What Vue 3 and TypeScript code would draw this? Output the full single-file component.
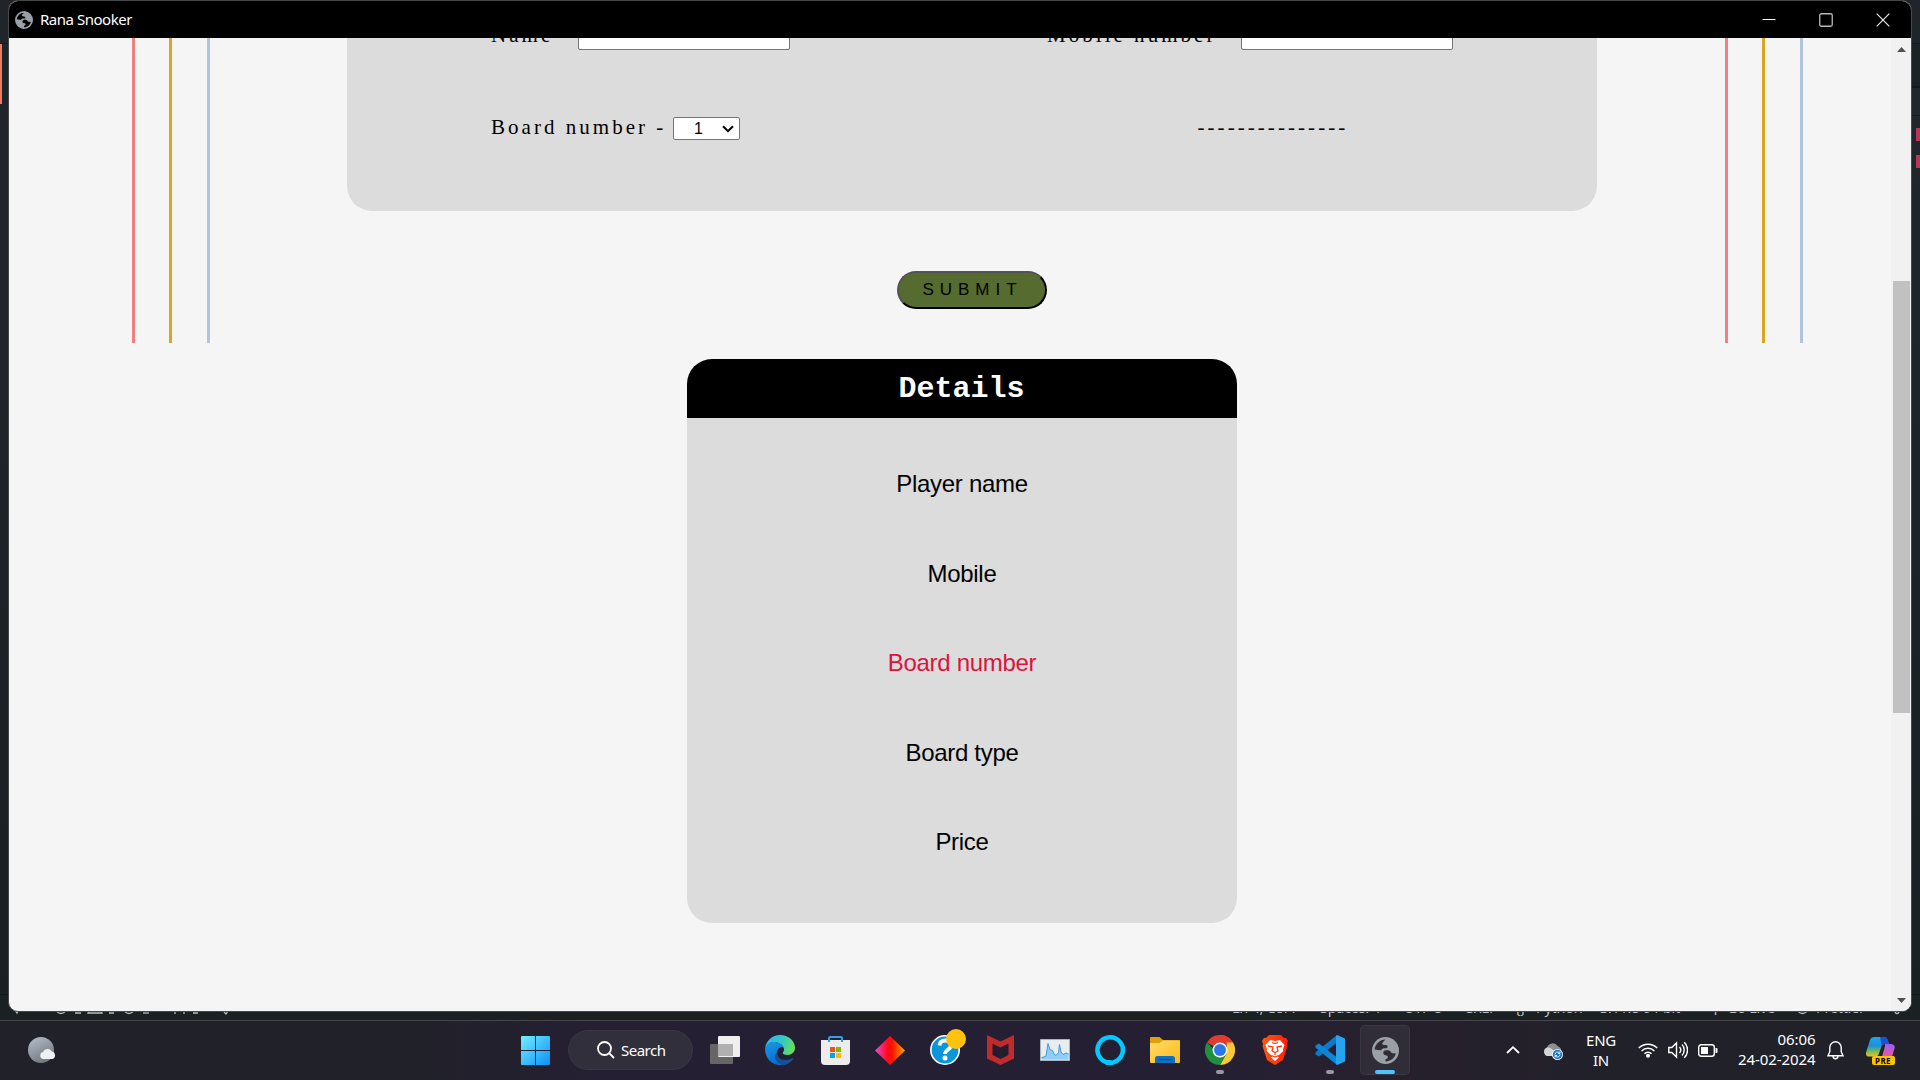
<script setup lang="ts">
import { ref } from 'vue'

interface DetailRow {
  label: string
  alert?: boolean
}

const stripes: string[] = ['coral', 'gold', 'steel']
const boards: number[] = [1, 2, 3, 4]
const board = ref<number>(1)
const playerName = ref<string>('')
const mobile = ref<string>('')

const globeLand =
  'M2.500 12C3.300 6.600 7.600 2.700 13 2.500L10.300 5.200c-.8.900-.3 2.300 1 2.400l2.200.2c2 .3 2 2.700.3 3-1.200.3-2.600-.2-3.600.5-1 .8-1.200 1.700-2.700 1.500zM11.800 13.200c1.700-.5 3.700-.6 5.200 0 1.400.6 1.500 2.300 3 2.500l3 .2C21.700 20.300 18 23.500 13 23.500v-2.200c2.300-.2 3-2.200 1.600-3.200-.9-.6-2.300-.3-3.100-1.200-.9-1.100-.9-3.200.3-3.700z'

const details: DetailRow[] = [
  { label: 'Player name' },
  { label: 'Mobile' },
  { label: 'Board number', alert: true },
  { label: 'Board type' },
  { label: 'Price' },
]
</script>

<template>
  <div class="desktop">
    <!-- editor behind the app window -->
    <div class="editor">
      <div class="edge edge-left"><i class="tab-mark"></i></div>
      <div class="edge edge-right"><i class="err"></i><i class="err"></i></div>
      <div class="status">
        <div class="status-left">
          <svg width="240" height="22" viewBox="0 0 240 22" fill="none" stroke="#b9bcc0" stroke-width="1.3">
            <path d="M12 10l5 8 5-8" />
            <circle cx="61" cy="13" r="5.5" /><path d="M75 18h6M88 18h14l-7-12zM109 18h5" />
            <circle cx="129" cy="13" r="5.500" /><path d="M143 18h6" />
            <path d="M175 19v-5M184 19v-5M175 16h9M193 18h5M224 17l2 2 2-3" />
          </svg>
        </div>
        <span style="width: 88px">Ln 4, Col 7</span>
        <span style="width: 84px">Spaces: 4</span>
        <span style="width: 60px">UTF-8</span>
        <span style="width: 51px">CRLF</span>
        <span style="width: 21px">{}</span>
        <span style="width: 64px">Python</span>
        <span style="width: 110px">3.11.8 64-bit</span>
        <span style="width: 17px">⚲</span>
        <span style="width: 69px">Go Live</span>
        <svg width="20" height="22" viewBox="0 0 20 22" fill="none" stroke="#b9bcc0" stroke-width="1.3"><circle cx="6.500" cy="13" r="5.500" /></svg>
        <span style="width: 74px">Prettier</span>
        <svg width="14" height="22" viewBox="0 0 14 22" fill="none" stroke="#b9bcc0" stroke-width="1.300"><path d="M1 16h11M5 16a2 2.500 0 0 0 4 0" /></svg>
      </div>
    </div>

    <main class="window">
      <header class="titlebar">
        <svg class="app-icon" width="18" height="18" viewBox="0 0 26 26">
          <circle cx="13" cy="13" r="13" fill="#9aa0a6" />
          <path :d="globeLand" fill="#000" />
        </svg>
        <span class="title">Rana Snooker</span>
        <div class="controls">
          <svg width="14" height="14" viewBox="0 0 14 14"><path d="M.5 6.500h13" stroke="#fff" /></svg>
          <svg width="14" height="14" viewBox="0 0 14 14"><rect x=".75" y=".75" width="12.500" height="12.500" rx="1.500" fill="none" stroke="#b8b8b8" stroke-width="1.300" /></svg>
          <svg width="14" height="14" viewBox="0 0 14 14"><path d="M.7.7l12.600 12.600M13.300.7L.7 13.300" stroke="#e8e8e8" stroke-width="1.200" /></svg>
        </div>
      </header>

      <div class="body">
        <section class="page">
          <div class="stage">
            <div class="stripes"><i v-for="s in stripes" :key="s" :class="s"></i></div>
            <form class="form" @submit.prevent>
              <div class="form-card">
                <div class="row row-top">
                  <label class="name-label">Name - </label>
                  <input v-model="playerName" type="text" />
                  <label class="mobile-label">Mobile number - </label>
                  <input v-model="mobile" type="text" />
                </div>
                <div class="row row-board">
                  <label class="board-label">Board number -</label>
                  <div class="select">
                    <span>{{ boards[board - 1] }}</span>
                    <svg width="12" height="8" viewBox="0 0 12 8"><path d="M1 1.200l5 5 5-5" fill="none" stroke="#000" stroke-width="2" /></svg>
                  </div>
                  <span class="dashes">---------------</span>
                </div>
              </div>
              <button class="submit" type="submit">SUBMIT</button>
            </form>
            <div class="stripes"><i v-for="s in stripes" :key="s" :class="s"></i></div>
          </div>

          <article class="details">
            <h2>Details</h2>
            <p v-for="d in details" :key="d.label" :class="{ alert: d.alert }">{{ d.label }}</p>
          </article>
        </section>
        <aside class="scrollbar">
          <svg width="9" height="5" viewBox="0 0 9 5"><path d="M0 5L4.500 0 9 5z" fill="#505050" /></svg>
          <div class="thumb"></div>
          <svg class="down" width="9" height="5" viewBox="0 0 9 5"><path d="M0 0l4.500 5L9 0z" fill="#505050" /></svg>
        </aside>
      </div>
    </main>

    <footer class="taskbar">
      <svg class="weather" width="28" height="27" viewBox="0 0 28 27">
        <defs>
          <linearGradient id="moon" x1="0" y1="0" x2=".5" y2="1"><stop offset="0" stop-color="#b7c0cb" /><stop offset="1" stop-color="#737b84" /></linearGradient>
        </defs>
        <circle cx="13" cy="13" r="13" fill="url(#moon)" />
        <path d="M15 22a3.600 3.600 0 0 1 0-7 5 5 0 0 1 8.800-.5A3.900 3.900 0 0 1 24.500 22z" fill="#edf1f4" />
      </svg>

      <nav class="apps">
        <span class="slot start">
          <svg width="29" height="29" viewBox="0 0 29 29">
            <defs><linearGradient id="win" x1="0" y1="0" x2="1" y2="1"><stop offset="0" stop-color="#74eeff" /><stop offset="1" stop-color="#0a90f8" /></linearGradient></defs>
            <path d="M1 0h13v14H0V1a1 1 0 0 1 1-1zM15 0h13a1 1 0 0 1 1 1v13H15zM0 15h14v14H1a1 1 0 0 1-1-1zM15 15h14v13a1 1 0 0 1-1 1H15z" fill="url(#win)" />
          </svg>
        </span>
        <span class="search">
          <svg width="18" height="18" viewBox="0 0 18 18" fill="none" stroke="#fff" stroke-width="1.800"><circle cx="7.500" cy="7.500" r="6.500" /><path d="M12 12l5 5" /></svg>
          <b>Search</b>
        </span>
        <span class="slot">
          <svg width="30" height="28" viewBox="0 0 30 28">
            <rect x="0" y="8" width="23" height="20" rx="1" fill="#666" />
            <rect x="8" y="0" width="22" height="21" rx="1" fill="#efeff0" />
            <path d="M8 8h15v12H8z" fill="#b0b0b1" />
          </svg>
        </span>
        <span class="slot">
          <svg width="30" height="30" viewBox="0 0 30 30">
            <defs>
              <linearGradient id="e1" x1="0" y1=".3" x2="1" y2=".5"><stop offset="0" stop-color="#2fb6f0" /><stop offset=".55" stop-color="#32c8c8" /><stop offset="1" stop-color="#69e04f" /></linearGradient>
              <linearGradient id="e2" x1="0" y1="0" x2=".4" y2="1"><stop offset="0" stop-color="#1a9be2" /><stop offset="1" stop-color="#0a6cd0" /></linearGradient>
            </defs>
            <path d="M0 14C.8 6 7 0 15 0c8.500 0 15 6 15 12.800 0 4.500-3.500 7.200-7.500 7.200-3.500 0-5-1.200-4.700-2.200.4-1 1.200-1.600 1.200-3.300C19 10.800 14.500 7 9 7 5 7 1.800 9.800 0 14z" fill="url(#e1)" />
            <path d="M0 14C1.500 9.500 5 7 9 7c4.500 0 8.500 2.500 9.700 5.500C16 11 12 13.500 12 18c0 6 5 9.500 7 11-1.500.7-2.700 1-4 1C6.500 30 0 23 0 14z" fill="url(#e2)" />
            <path d="M12 17c-.5 4.500 3.500 8 8.500 8 3 0 5-.9 7-2 .6-.3 1 .2.700.7C26 27 22 30 18 30c-5-1-8-5-8-8.500 0-2 .8-3.500 2-4.500z" fill="#12509b" />
          </svg>
        </span>
        <span class="slot">
          <svg width="29" height="29" viewBox="0 0 29 29">
            <path d="M0 4h29v21a4 4 0 0 1-4 4H4a4 4 0 0 1-4-4z" fill="#ececec" />
            <path d="M8 6V2a1 1 0 0 1 1-1h11a1 1 0 0 1 1 1v4" fill="none" stroke="#22a6e8" stroke-width="2" />
            <path d="M9 11h5v5H9z" fill="#f25022" /><path d="M15 11h5v5h-5z" fill="#7fba00" /><path d="M9 17h5v5H9z" fill="#00a4ef" /><path d="M15 17h5v5h-5z" fill="#ffb900" />
          </svg>
        </span>
        <span class="slot">
          <svg width="30" height="29" viewBox="0 0 30 29">
            <defs><linearGradient id="dia"><stop offset="0" stop-color="#e84bd0" /><stop offset=".42" stop-color="#ff0a1e" /><stop offset=".58" stop-color="#ff1200" /><stop offset="1" stop-color="#ffae00" /></linearGradient></defs>
            <path d="M15 0l15 14.500L15 29 0 14.500z" fill="url(#dia)" />
          </svg>
        </span>
        <span class="slot">
          <svg width="30" height="30" viewBox="0 0 30 30">
            <circle cx="15" cy="15" r="14.200" fill="#0a96d8" stroke="#fff" stroke-width="1.600" />
            <path d="M9.500 10.500c.3-3.500 3-5 5.800-5 3.200 0 5.700 1.800 5.700 4.700 0 4.300-6 4.300-6 8.800" fill="none" stroke="#fff" stroke-width="3.800" />
            <circle cx="15" cy="23" r="2.500" fill="#fff" />
          </svg>
          <i class="badge"></i>
        </span>
        <span class="slot">
          <svg width="27" height="30" viewBox="0 0 27 30"><path d="M0 0l13.500 6.500L27 0v23.500L13.500 30 0 23.500z" fill="#c22a2b" /><path d="M5.500 8.500l8 4 8-4v11.500l-8 4-8-4z" fill="#241d31" /></svg>
        </span>
        <span class="slot">
          <svg width="30" height="22" viewBox="0 0 30 22">
            <path d="M.5.500h29v21H.5z" fill="#e8edf1" stroke="#aab4bd" />
            <path d="M1.500 20.500v-2l2.500-.5 2-1L8 4.500l2 6 2.500 1L14 15l2 1.500 2.500-3 1-8L21 13l2 2.500 3-1.500 2.500 1v5.500z" fill="#8ecdf7" />
            <path d="M1.500 18.500L4 18l2-1L8 4.500l2 6 2.500 1L14 15l2 1.500 2.500-3 1-8L21 13l2 2.500 3-1.500 2.500 1" fill="none" stroke="#469bd3" />
          </svg>
        </span>
        <span class="slot">
          <svg width="30" height="30" viewBox="0 0 30 30"><path d="M13 27.500a12.700 12.700 0 1 1 6-.4C16 28 14 28.500 13 30z" fill="none" stroke="#00caff" stroke-width="4.500" /><path d="M12.800 25h4.500l-3.800 2.500V30h-.7z" fill="#00caff" /></svg>
        </span>
        <span class="slot">
          <svg width="30" height="26" viewBox="0 0 30 26">
            <defs><linearGradient id="fold" x1="0" y1="0" x2="1" y2="1"><stop offset="0" stop-color="#ffdc6c" /><stop offset="1" stop-color="#fcba14" /></linearGradient></defs>
            <path d="M0 1a1 1 0 0 1 1-1h8.500L13 3h16a1 1 0 0 1 1 1v6H0z" fill="#e0a00c" />
            <path d="M0 6h9.500L13 3.500h17V25a1 1 0 0 1-1 1H1a1 1 0 0 1-1-1z" fill="url(#fold)" />
            <path d="M5 26v-4.500a2.500 2.500 0 0 1 2.500-2.500h15a2.500 2.500 0 0 1 2.500 2.500V26z" fill="#0f6fc0" /><path d="M9 22.500h12.500" stroke="#0b4a86" />
          </svg>
        </span>
        <span class="slot running">
          <svg width="30" height="30" viewBox="0 0 30 30">
            <path d="M15 15L2 7.500A15 15 0 0 1 28 7.500z" fill="#e33b2e" />
            <path d="M15 0a15 15 0 0 1 13 7.500H15z" fill="#e33b2e" />
            <path d="M28 7.500A15 15 0 0 1 15 30l6.500-11.500L22 7.500z" fill="#fcc934" />
            <path d="M2 7.500A15 15 0 0 0 15 30l6.500-11.200L15 20z" fill="#1f9040" />
            <circle cx="15" cy="15" r="7.500" fill="#fff" /><circle cx="15" cy="15" r="6" fill="#2a76ea" />
          </svg>
        </span>
        <span class="slot">
          <svg width="26" height="30" viewBox="0 0 26 30">
            <defs><linearGradient id="brave"><stop offset="0" stop-color="#ff5a10" /><stop offset="1" stop-color="#ff1c04" /></linearGradient></defs>
            <path d="M7 0h12l3 3 2-.2L26 6l-1 3 .5 2-4.500 14L13 30l-8-5L.5 11 1 9 0 6l2-3.200L4 3z" fill="url(#brave)" />
            <path d="M8 5l5 1 5-1 4.500 5-1.500 4 .3 2L17 20l-1.500 1.500 1.500 1-4 3.500-4-3.500 1.500-1L9 20l-4.300-4 .3-2-1.500-4z" fill="#fff" />
            <path d="M6 11l5 1-1 4 3 1.500 3-1.500-1-4 5-1M13 17v3M9.500 20.500L13 22l3.500-1.500M10 7.500l3 1 3-1" fill="none" stroke="#ff3c0a" stroke-width="1.300" />
          </svg>
        </span>
        <span class="slot running">
          <svg width="30" height="30" viewBox="0 0 30 30">
            <path d="M22 0l-.5 8L4 21.500.5 19.500v-2.200z" fill="#0b7ac8" />
            <path d="M22 30l-.5-8L4 8.500.5 10.500v2.200z" fill="#0d86d6" />
            <path d="M22 0l8 3.500v23L22 30l-1-1V1z" fill="#27a4f0" />
          </svg>
        </span>
        <span class="slot active">
          <svg width="27" height="27" viewBox="0 0 26 26">
            <circle cx="13" cy="13" r="13" fill="#9aa0a6" />
            <path :d="globeLand" fill="#302c38" />
          </svg>
        </span>
      </nav>

      <div class="tray">
        <svg class="chev" width="14" height="8" viewBox="0 0 14 8"><path d="M1 7l6-5.800L13 7" fill="none" stroke="#fff" stroke-width="1.800" /></svg>
        <svg class="cloud" width="20" height="17" viewBox="0 0 20 17">
          <path d="M4.500 13A4.500 4.500 0 0 1 4 4.500 6 6 0 0 1 14.800 3.200 5 5 0 0 1 18 9l-4 4z" fill="#8e8f93" /><path d="M4 13A4.500 4.500 0 0 1 3 5c4-1.500 5 .5 10 4l-1 4z" fill="#d4d5d7" />
          <circle cx="14.500" cy="11.500" r="5.500" fill="#fff" /><circle cx="14.500" cy="11.500" r="4.700" fill="#1574c4" />
          <path d="M12 11.500a2.600 2.600 0 0 1 4.500-1.700M17 11.500a2.600 2.600 0 0 1-4.500 1.700M17 8.500v2h-2M12 14.500v-2h2" fill="none" stroke="#fff" stroke-width=".9" />
        </svg>
        <div class="lang"><span>ENG</span><span>IN</span></div>
        <svg class="wifi" width="20" height="16" viewBox="0 0 20 16" fill="none" stroke="#fff" stroke-width="1.500"><path d="M.8 6a13 13 0 0 1 18.400 0M3.600 9a9 9 0 0 1 12.800 0M6.500 11.800a5 5 0 0 1 7 0" /><circle cx="10" cy="13.800" r="1.300" fill="#fff" /></svg>
        <svg class="sound" width="20" height="18" viewBox="0 0 20 18" fill="none" stroke="#fff" stroke-width="1.400"><path d="M.8 6.500h3L8.500 2v14l-4.700-4.500h-3zM11.500 6a4.500 4.500 0 0 1 0 6M14 3.500a8 8 0 0 1 0 11M16.300 1.200a11 11 0 0 1 0 15.600" /></svg>
        <svg class="battery" width="20" height="13" viewBox="0 0 20 13"><rect x=".7" y=".7" width="15.600" height="11.600" rx="2.500" fill="none" stroke="#fff" stroke-width="1.400" /><path d="M3 3h7v7H3zM17.500 4h1a1 1 0 0 1 1 1v3a1 1 0 0 1-1 1h-1z" fill="#fff" /></svg>
        <div class="clock"><span>06:06</span><span>24-02-2024</span></div>
        <svg class="bell" width="17" height="19" viewBox="0 0 17 19" fill="none" stroke="#fff" stroke-width="1.400"><path d="M8.500.8a5.700 5.700 0 0 0-5.700 5.700v4.200L1 14.800h15l-1.800-4.100V6.500A5.700 5.700 0 0 0 8.500.8zM6 15a2.500 2.700 0 0 0 5 0" /></svg>
        <div class="copilot">
          <svg width="29" height="25" viewBox="0 0 29 25">
            <defs>
              <linearGradient id="c1" x1="0" y1="0" x2="0" y2="1"><stop offset="0" stop-color="#19a5ee" /><stop offset=".45" stop-color="#1f8fd8" /><stop offset=".75" stop-color="#76bf52" /><stop offset="1" stop-color="#f0c020" /></linearGradient>
              <linearGradient id="c2" x1=".5" y1="0" x2=".3" y2="1"><stop offset="0" stop-color="#a35cf0" /><stop offset=".6" stop-color="#e457a5" /><stop offset="1" stop-color="#ff7a60" /></linearGradient>
            </defs>
            <path d="M8 0h10c2.500 0 3.500 2 4.200 4.500L23 7h-4c-2 0-3 1-3.700 3l-2.500 7c-.6 1.600-1.600 2.500-3.300 2.500H3c-2.500 0-3.500-2-2.800-4.500L4 3C4.700 1 6 0 8 0z" fill="url(#c1)" />
            <path d="M14 0h4c2.500 0 3.500 2 4.200 4.500L23 7h-4c-1.500 0-2.500.6-3.200 2z" fill="#1c4fd8" />
            <path d="M19 7h6c3 0 4.300 2 3.500 4.500L25 23c-.6 1.500-1.500 2-3 2H12c2 0 2.700-1 3.300-3l3.200-11c.5-1.700.5-3 .5-4z" fill="url(#c2)" />
          </svg>
          <em>PRE</em>
        </div>
      </div>
    </footer>
  </div>
</template>

<style>
html,
body {
  margin: 0;
  overflow: hidden;
  background: #1d2125;
}
</style>

<style scoped>
* {
  box-sizing: border-box;
}
svg {
  display: block;
  flex: none;
}
.desktop {
  position: relative;
  width: 1920px;
  height: 1080px;
  overflow: hidden;
  display: flex;
  flex-direction: column;
  font-family: 'Noto Sans', 'Open Sans', sans-serif;
}

/* editor */
.editor {
  height: 1020px;
  display: grid;
  grid-template-columns: 1fr 1fr;
  grid-template-rows: 994px 26px;
  background: #1d2125;
}
.edge {
  background: linear-gradient(#1f2528 0 43px, #16191c 43px 44px, #212529 44px 300px, #1b1f22);
  padding-top: 44px;
}
.tab-mark {
  display: block;
  width: 2px;
  height: 60px;
  background: #ee7a60;
}
.edge-right {
  padding-top: 128px;
  display: flex;
  flex-direction: column;
  align-items: flex-end;
  gap: 14px;
  background: linear-gradient(#1f2528 0 43px, #181b1e 43px 44px, #1d2224 44px 86px, #16191c 86px 88px, #22272b 88px 115px, #181b1e 115px 116px, #20262a 116px, #1a1f22);
}
.err {
  width: 4px;
  height: 13px;
  background: #bd345a;
}
.status {
  grid-column: 1 / 3;
  display: flex;
  border-top: 1px solid #15181a;
  background: #1b2023;
  color: #b9bcc0;
  font-size: 14.5px;
  letter-spacing: -0.3px;
  line-height: 25px;
  white-space: nowrap;
}
.status span {
  flex: none;
}
.status-left {
  width: 1232px;
}

/* app window */
.window {
  position: absolute;
  left: 8px;
  top: 0;
  width: 1904px;
  height: 1012px;
  border: 1px solid #45484a;
  border-radius: 10px;
  overflow: hidden;
  background: #f5f5f5;
  display: flex;
  flex-direction: column;
}
.titlebar {
  height: 37px;
  flex: none;
  background: #000;
  display: flex;
  align-items: center;
  padding: 0 21.5px 0 6px;
  color: #fff;
}
.title {
  margin: -2px 0 0 7px;
  font-size: 15px;
  letter-spacing: -0.48px;
  line-height: 20px;
}
.controls {
  margin-left: auto;
  display: flex;
  gap: 43px;
}
.body {
  flex: 1;
  min-height: 0;
  display: flex;
}
.page {
  width: 1882px;
  overflow: hidden;
}
.stage {
  height: 305px;
  display: flex;
  padding: 0 88px 0 123px;
  justify-content: space-between;
}
.stripes {
  display: flex;
  width: 78px;
}
.stripes i {
  width: 3px;
  height: 305px;
  flex: none;
}
.stripes .coral {
  margin-right: 34px;
  background: #f08080;
}
.stripes .gold {
  margin-right: 35px;
  background: #daa520;
}
.steel {
  background: #b0c4de;
}
.form {
  width: 1250px;
  margin-left: 9px;
  display: flex;
  flex-direction: column;
  align-items: center;
}
.form-card {
  width: 1250px;
  height: 173px;
  flex: none;
  background: #dcdcdc;
  border-radius: 0 0 25px 25px;
  padding-left: 144px;
}
.row {
  display: flex;
  align-items: flex-end;
  font-family: Georgia, 'Liberation Serif', serif;
  font-size: 21px;
  letter-spacing: 3.03px;
  line-height: 24px;
  color: #000;
  white-space: pre;
}
.row-top {
  height: 12px;
}
.row-top label {
  margin-bottom: 3px;
}
.name-label {
  width: 87px;
}
.mobile-label {
  width: 194px;
  margin-left: 257px;
}
input {
  width: 212px;
  height: 27px;
  border: 1px solid #767676;
  border-radius: 2px;
  background: #fff;
  flex: none;
}
.row-board {
  height: 24px;
  margin-top: 66px;
}
.board-label {
  width: 182px;
  margin-bottom: 1px;
}
.select {
  width: 67px;
  height: 23px;
  border: 1px solid #767676;
  border-radius: 2px;
  background: #fff;
  display: flex;
  align-items: center;
  justify-content: space-between;
  padding: 0 5px 0 20px;
  font: 16px/21px 'Liberation Sans', Arial, sans-serif;
  letter-spacing: 0;
}
.dashes {
  margin: 0 0 1px 457.500px;
  letter-spacing: 3.06px;
}
.submit {
  margin-top: 60px;
  width: 150px;
  height: 38px;
  padding: 0 0 1px 1px;
  border: 2px solid;
  border-color: #535353 #000 #000 #535353;
  border-radius: 19px;
  background: #556b2f;
  color: #000;
  font: 17px/20px 'Liberation Sans', Arial, sans-serif;
  letter-spacing: 6px;
}
.details {
  width: 550px;
  height: 564px;
  margin: 16px 0 0 678px;
  background: #dcdcdc;
  border-radius: 25px;
  overflow: hidden;
  text-align: center;
}
.details h2 {
  margin: 0 0 21px;
  height: 59px;
  padding-right: 1px;
  background: #000;
  color: #fff;
  font: bold 30px/61px 'Liberation Mono', 'Courier New', monospace;
}
.details p {
  margin: 0;
  height: 89.6px;
  font: 24px/89.6px 'Liberation Sans', Arial, sans-serif;
  letter-spacing: -0.3px;
  color: #000;
}
.details p.alert {
  color: #dc143c;
}
.scrollbar {
  width: 20px;
  background: #f1f1f1;
  display: flex;
  flex-direction: column;
  align-items: center;
  padding: 9px 0 8px;
}
.thumb {
  width: 17px;
  height: 432px;
  margin-top: 229px;
  background: #c1c1c1;
}
.down {
  margin-top: auto;
}

/* taskbar */
.taskbar {
  height: 60px;
  border-top: 1px solid #47474c;
  background: linear-gradient(90deg, #21212a 0, #21212a 22%, #251f33 32%, #251f33 64%, #26202c 74%, #21212a 84%);
  display: flex;
  align-items: center;
  padding-bottom: 1px;
  color: #fff;
}
.weather {
  margin-left: 28px;
}
.apps {
  margin-left: 451.500px;
  display: flex;
  align-items: center;
}
.slot {
  position: relative;
  width: 55px;
  height: 58px;
  display: flex;
  align-items: center;
  justify-content: center;
}
.slot.start {
  margin-right: 5.500px;
}
.search {
  width: 125px;
  height: 40px;
  margin-right: 4.5px;
  border-radius: 20px;
  background: #322f3d;
  border: 1px solid #393644;
  display: flex;
  align-items: center;
  padding-left: 28px;
}
.search b {
  margin-left: 6px;
  font-size: 15px;
  font-weight: 400;
  letter-spacing: -0.5px;
}
.badge {
  position: absolute;
  left: 28.5px;
  top: 8px;
  width: 20px;
  height: 20px;
  border-radius: 50%;
  background: #ffc20e;
}
.running::after,
.active::after {
  content: '';
  position: absolute;
  left: 23.500px;
  bottom: 5px;
  width: 8px;
  height: 4px;
  border-radius: 2px;
  background: #9a96a0;
}
.active::after {
  left: 15px;
  bottom: 1px;
  width: 20px;
  background: #4cc2ff;
}
.slot.active {
  width: 50px;
  height: 50px;
  margin-left: 2.500px;
  border-radius: 5px;
  background: #302c38;
  box-shadow: inset 0 0 0 1px #3a3642;
}
.tray {
  margin-left: auto;
  display: flex;
  align-items: center;
  padding-right: 25.500px;
  font-size: 15px;
  line-height: 20px;
}
.lang,
.clock {
  display: flex;
  flex-direction: column;
}
.cloud {
  margin: 3px 0 0 23px;
}
.lang {
  width: 40px;
  margin: -1px 17px 0 18px;
  align-items: center;
  letter-spacing: -0.3px;
}
.sound {
  margin-left: 10px;
}
.battery {
  margin-left: 10px;
}
.clock {
  width: 88px;
  margin: -3px 0 0 9.500px;
  align-items: flex-end;
  letter-spacing: -0.08px;
}
.bell {
  margin-left: 11px;
}
.copilot {
  position: relative;
  width: 29px;
  height: 28px;
  margin: 2px 0 0 22px;
}
.copilot em {
  position: absolute;
  left: 6px;
  top: 19px;
  width: 23px;
  height: 9px;
  border-radius: 2px;
  background: #ffc400;
  color: #000;
  font: bold 8px/9px 'Noto Sans', sans-serif;
  letter-spacing: 0.4px;
  text-align: center;
}
</style>
